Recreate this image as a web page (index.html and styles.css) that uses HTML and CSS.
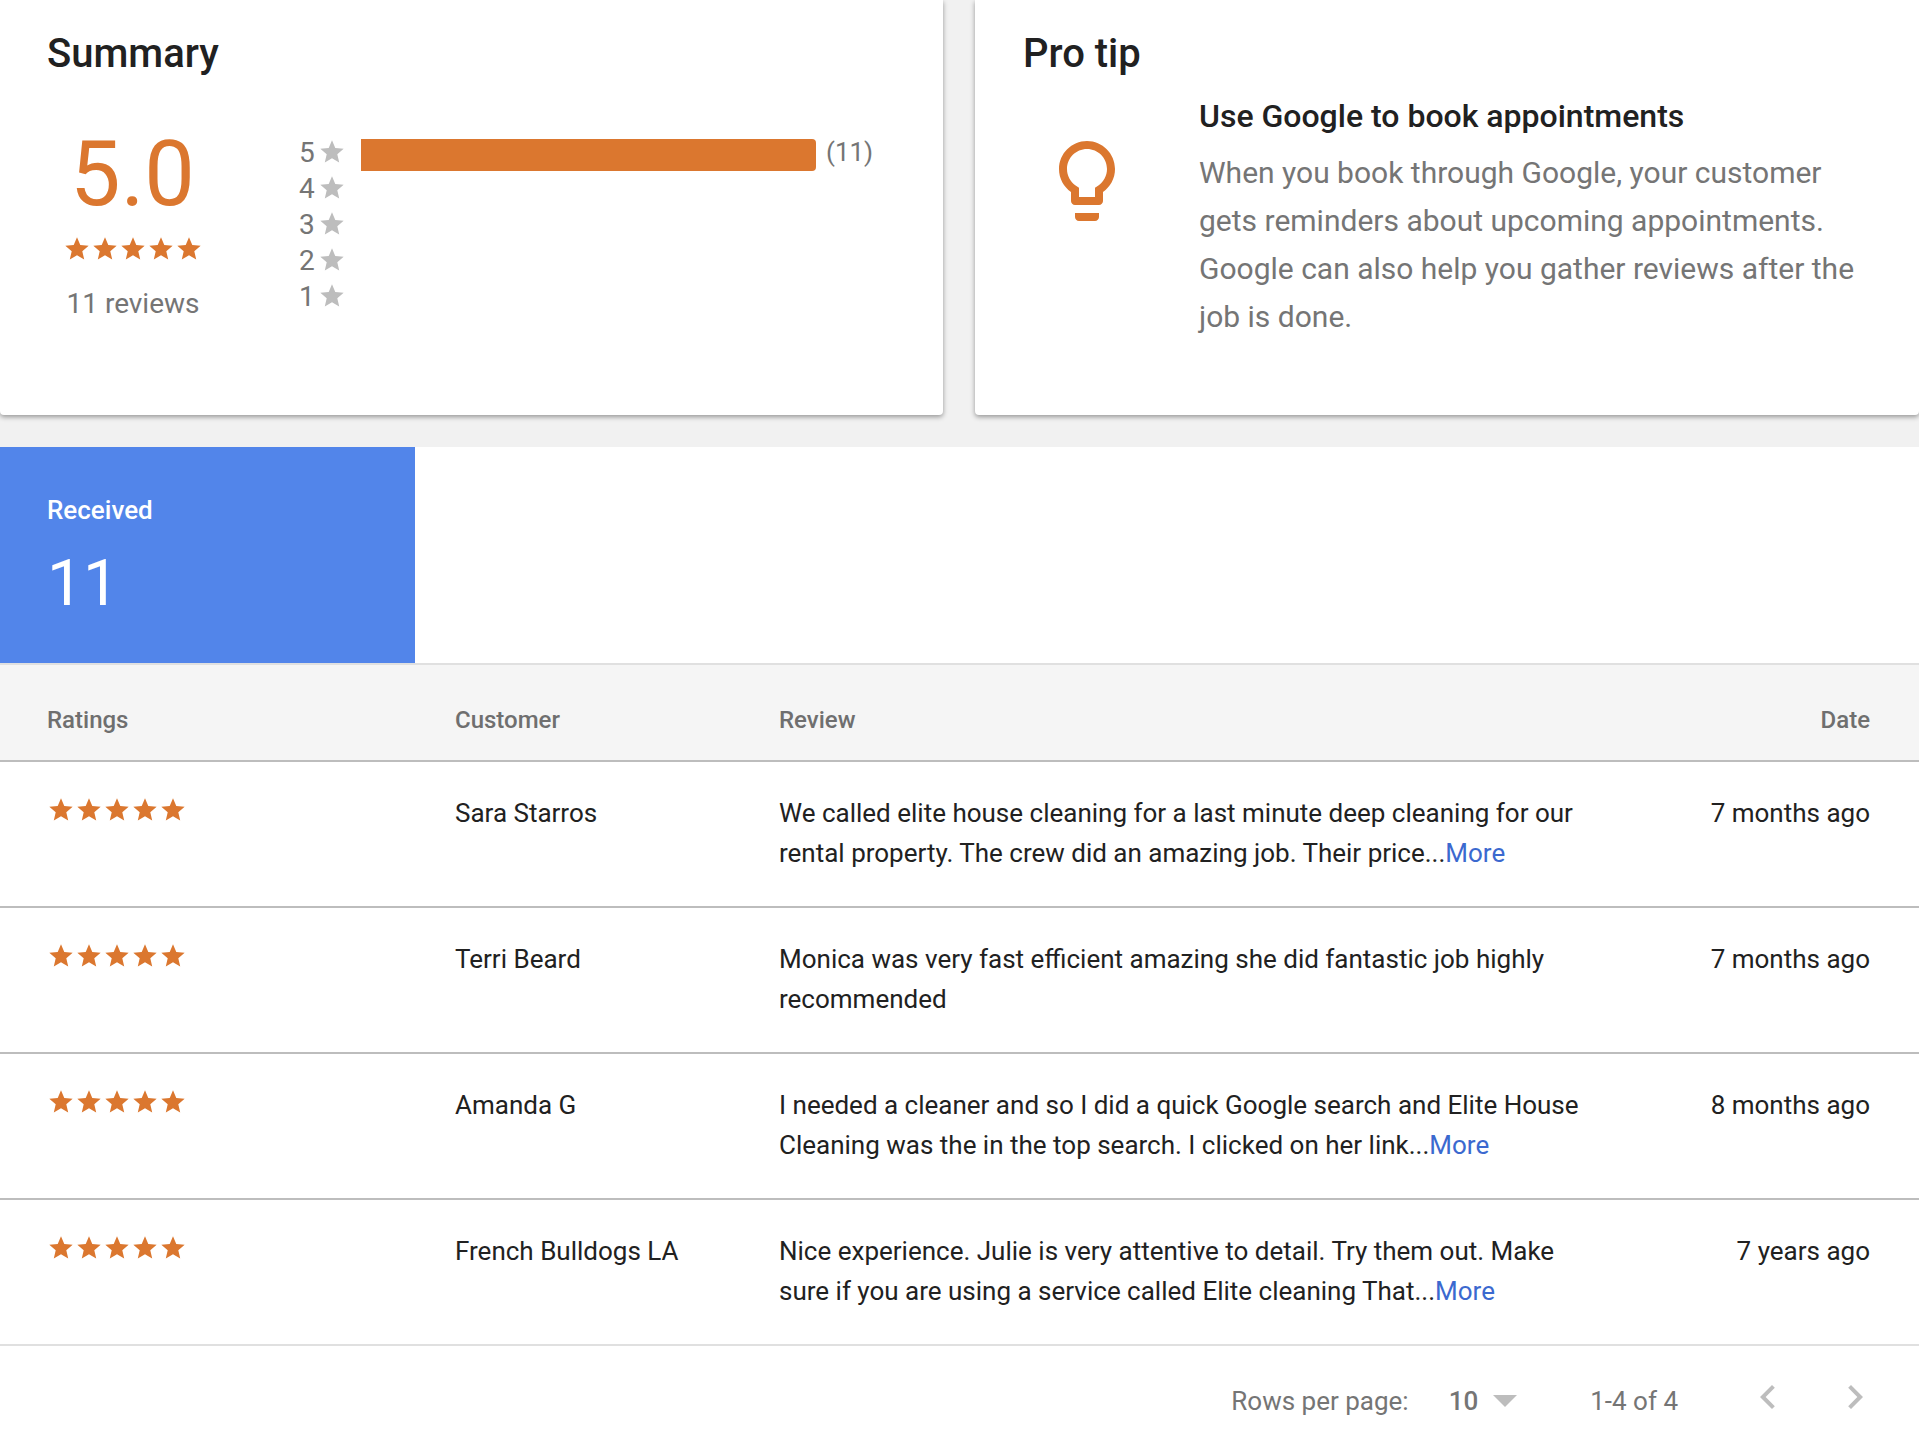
FILE: index.html
```html
<!DOCTYPE html>
<html lang="en">
<head>
<meta charset="utf-8">
<title>Reviews</title>
<link rel="stylesheet" href="styles.css">
</head>
<body>
<svg class="defs" width="0" height="0" aria-hidden="true">
  <symbol id="star" viewBox="0 0 24 24"><path d="M12 17.27L18.18 21l-1.64-7.03L22 9.24l-7.19-.61L12 2 9.19 8.63 2 9.24l5.46 4.73L5.82 21z"/></symbol>
</svg>
<section class="cards">
  <div class="card card-summary">
    <h2 class="card-title">Summary</h2>
    <div class="summary-body">
      <div class="score">
        <div class="score-value">5.0</div>
        <div class="stars score-stars">
          <svg class="star"><use href="#star"/></svg><svg class="star"><use href="#star"/></svg><svg class="star"><use href="#star"/></svg><svg class="star"><use href="#star"/></svg><svg class="star"><use href="#star"/></svg>
        </div>
        <div class="score-count">11 reviews</div>
      </div>
      <div class="dist">
        <div class="dist-row"><span class="dist-num">5</span><svg class="star star-grey"><use href="#star"/></svg><span class="dist-track"><span class="dist-bar"></span></span><span class="dist-count">(11)</span></div>
        <div class="dist-row"><span class="dist-num">4</span><svg class="star star-grey"><use href="#star"/></svg></div>
        <div class="dist-row"><span class="dist-num">3</span><svg class="star star-grey"><use href="#star"/></svg></div>
        <div class="dist-row"><span class="dist-num">2</span><svg class="star star-grey"><use href="#star"/></svg></div>
        <div class="dist-row"><span class="dist-num">1</span><svg class="star star-grey"><use href="#star"/></svg></div>
      </div>
    </div>
  </div>
  <div class="card card-tip">
    <h2 class="card-title">Pro tip</h2>
    <div class="tip-body">
      <svg class="bulb" viewBox="0 0 24 24"><path d="M9 21c0 .55.45 1 1 1h4c.55 0 1-.45 1-1v-1H9v1zm3-19C8.14 2 5 5.14 5 9c0 2.38 1.19 4.47 3 5.74V17c0 .55.45 1 1 1h6c.55 0 1-.45 1-1v-2.26c1.81-1.27 3-3.36 3-5.74 0-3.86-3.14-7-7-7zm2.85 11.1l-.85.6V16h-4v-2.3l-.85-.6C7.8 12.16 7 10.63 7 9c0-2.76 2.24-5 5-5s5 2.24 5 5c0 1.63-.8 3.16-2.15 4.1z"/></svg>
      <div class="tip-text">
        <h3 class="tip-title">Use Google to book appointments</h3>
        <p class="tip-desc">When you book through Google, your customer gets reminders about upcoming appointments. Google can also help you gather reviews after the job is done.</p>
      </div>
    </div>
  </div>
</section>
<section class="panel">
  <div class="tabs">
    <div class="tab">
      <div class="tab-label">Received</div>
      <div class="tab-value">11</div>
    </div>
  </div>
  <div class="row row-head">
    <div>Ratings</div><div>Customer</div><div>Review</div><div class="date">Date</div>
  </div>
  <div class="row">
    <div class="stars"><svg class="star"><use href="#star"/></svg><svg class="star"><use href="#star"/></svg><svg class="star"><use href="#star"/></svg><svg class="star"><use href="#star"/></svg><svg class="star"><use href="#star"/></svg></div>
    <div>Sara Starros</div>
    <div class="review">We called elite house cleaning for a last minute deep cleaning for our rental property. The crew did an amazing job. Their price...<a class="more">More</a></div>
    <div class="date">7 months ago</div>
  </div>
  <div class="row">
    <div class="stars"><svg class="star"><use href="#star"/></svg><svg class="star"><use href="#star"/></svg><svg class="star"><use href="#star"/></svg><svg class="star"><use href="#star"/></svg><svg class="star"><use href="#star"/></svg></div>
    <div>Terri Beard</div>
    <div class="review">Monica was very fast efficient amazing she did fantastic job highly recommended</div>
    <div class="date">7 months ago</div>
  </div>
  <div class="row">
    <div class="stars"><svg class="star"><use href="#star"/></svg><svg class="star"><use href="#star"/></svg><svg class="star"><use href="#star"/></svg><svg class="star"><use href="#star"/></svg><svg class="star"><use href="#star"/></svg></div>
    <div>Amanda G</div>
    <div class="review">I needed a cleaner and so I did a quick Google search and Elite House Cleaning was the in the top search. I clicked on her link...<a class="more">More</a></div>
    <div class="date">8 months ago</div>
  </div>
  <div class="row row-last">
    <div class="stars"><svg class="star"><use href="#star"/></svg><svg class="star"><use href="#star"/></svg><svg class="star"><use href="#star"/></svg><svg class="star"><use href="#star"/></svg><svg class="star"><use href="#star"/></svg></div>
    <div>French Bulldogs LA</div>
    <div class="review">Nice experience. Julie is very attentive to detail. Try them out. Make sure if you are using a service called Elite cleaning That...<a class="more">More</a></div>
    <div class="date">7 years ago</div>
  </div>
  <div class="pager">
    <span class="pager-label">Rows per page:</span>
    <span class="pager-size">10</span>
    <span class="pager-caret"></span>
    <span class="pager-range">1-4 of 4</span>
    <svg class="chev chev-prev" viewBox="0 0 24 24"><path d="M15.41 7.41L14 6l-6 6 6 6 1.41-1.41L10.83 12z"/></svg>
    <svg class="chev chev-next" viewBox="0 0 24 24"><path d="M10 6L8.59 7.41 13.17 12l-4.58 4.59L10 18l6-6z"/></svg>
  </div>
</section>
</body>
</html>
```
FILE: styles.css
```css
* { box-sizing: border-box; }
html, body { margin: 0; padding: 0; }
body {
  background: #f1f1f1;
  font-family: Roboto, "Liberation Sans", sans-serif;
  color: #212121;
  font-size: 26px;
  width: 1919px;
  height: 1449px;
  overflow: hidden;
}
.defs { display: block; height: 0; }
.cards { display: flex; gap: 32px; height: 415px; margin-bottom: 32px; }
.card {
  background: #fff;
  box-shadow: 0 2px 5px rgba(0, 0, 0, .38);
  border-radius: 0 0 4px 4px;
  padding-top: 33px;
}
.card-summary { width: 943px; padding-left: 47px; }
.card-tip { flex: 1; padding-left: 48px; }
.card-title { margin: 0; font-size: 40px; line-height: 42px; font-weight: 500; color: #212121; }

.summary-body { display: flex; margin-top: 59px; }
.score { width: 172px; text-align: center; margin-right: 80px; }
.score-value { font-size: 90px; line-height: 88px; font-weight: 400; color: #db772f; margin-top: -3px; margin-left: -1px; }
.stars { display: flex; height: 28px; }
.score-stars { justify-content: center; margin-top: 16px; }
.score-count { font-size: 28px; line-height: 36px; color: #757575; margin-top: 23px; }
.star { width: 28px; height: 28px; fill: #db772f; flex: none; display: block; }
.star-grey { fill: #bdbdbd; }
.dist-row { display: flex; align-items: center; height: 36px; color: #757575; font-size: 28px; }
.dist-num { width: 19px; }
.dist-track { width: 455px; margin-left: 15px; }
.dist-bar { display: block; height: 32px; background: #db772f; border-radius: 0 4px 4px 0; margin-top: 3px; margin-bottom: -3px; }
.dist-count { margin-left: 10px; font-size: 26px; }

.tip-body { display: flex; margin-top: 21px; }
.bulb { width: 96px; height: 96px; fill: #db772f; flex: none; margin: 37px 64px 0 16px; }
.tip-text { width: 680px; }
.tip-title { margin: 0; font-size: 32px; line-height: 40px; font-weight: 500; color: #212121; }
.tip-desc { margin: 13px 0 0; font-size: 30px; line-height: 48px; color: #757575; }

.panel { background: #fff; height: 1002px; }
.tabs { height: 218px; border-bottom: 2px solid #e0e0e0; }
.tab { width: 415px; height: 216px; background: #5285ea; color: #fff; padding: 47px 0 0 47px; }
.tab-label { font-size: 26px; line-height: 32px; font-weight: 500; }
.tab-value { font-size: 64px; line-height: 80px; margin-top: 18px; }

.row {
  display: grid;
  grid-template-columns: 408px 324px 1fr auto;
  height: 146px;
  padding: 31px 49px 0 47px;
  border-bottom: 2px solid #bdbdbd;
  line-height: 40px;
  font-size: 26px;
}
.row-last { border-bottom-color: #e0e0e0; }
.row-head {
  height: 97px;
  padding-top: 35px;
  background: #f5f5f5;
  color: #6f6f6f;
  font-weight: 500;
  font-size: 24px;
}
.row .stars { margin-top: 3px; }
.review { max-width: 830px; }
.date { text-align: right; }
.more { color: #3b69cf; }

.pager { display: flex; align-items: center; height: 104px; padding-right: 40px; color: #757575; font-size: 26px; padding-top: 6px; }
.pager-label { margin-left: auto; }
.pager-size { margin-left: 40px; font-weight: 500; }
.pager-caret {
  width: 0; height: 0; margin-left: 15px;
  border-left: 12px solid transparent;
  border-right: 12px solid transparent;
  border-top: 12px solid #bdbdbd;
}
.pager-range { margin-left: 73px; }
.chev { width: 48px; height: 48px; fill: #bdbdbd; margin-top: -8px; }
.chev-prev { margin-left: 66px; }
.chev-next { margin-left: 39px; }
```
